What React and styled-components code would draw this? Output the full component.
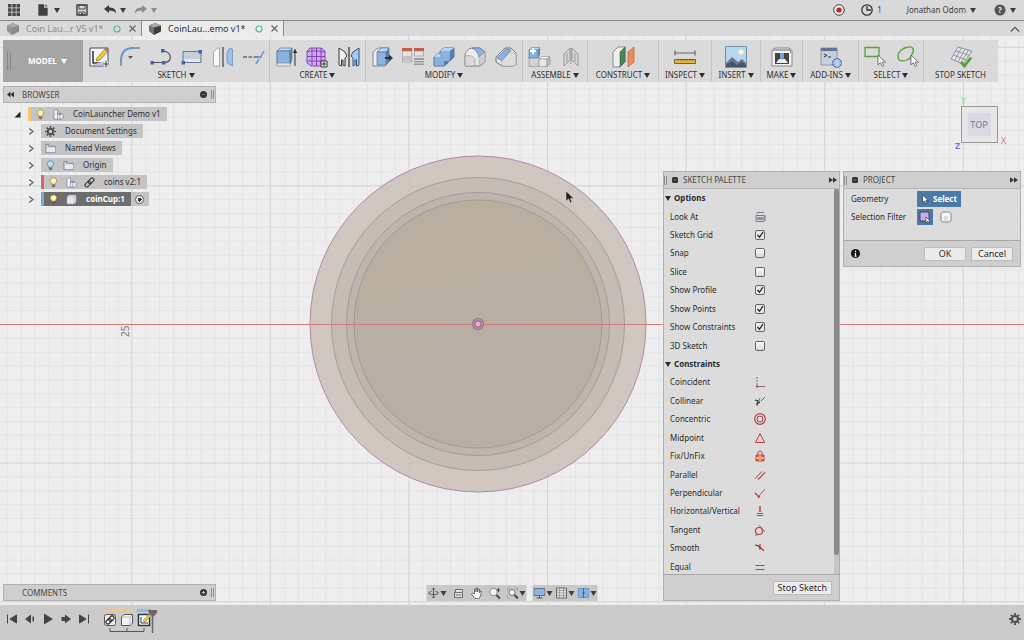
import { useState } from 'react';
import styled, { createGlobalStyle } from 'styled-components';

const GlobalStyle = createGlobalStyle`
  * {
    box-sizing: border-box;
  }

  body {
    margin: 0;
    font-family: "Noto Sans", "Open Sans", sans-serif;
    font-size: 8px;
    line-height: 12px;
    color: #2b2b2b;
    background: #ededed;
  }

  button, input {
    font: inherit;
    color: inherit;
    margin: 0;
  }

  svg {
    display: block;
    flex: none;
  }
`;

const Page = styled.div`
  min-height: 100vh;
  display: flex;
  flex-direction: column;
`;

const TopBar = styled.header`
  height: 21px;
  display: flex;
  align-items: center;
  justify-content: space-between;
  padding: 0 8px;
  background: #d9d9d9;
  border-bottom: 1px solid #858585;
`;

const BarSide = styled.div`
  display: flex;
  align-items: center;
  gap: ${props => props.$gap}px;
`;

const PlainButton = styled.button`
  display: flex;
  align-items: center;
  gap: 4px;
  padding: 0;
  border: 0;
  background: none;
  color: ${props => props.$faded ? '#8b8b8b' : '#3d3d3d'};
`;

const Caret = styled.span`
  flex: none;
  border: 3px solid transparent;
  border-top: 5px solid currentColor;
  border-bottom: 0;
`;

const TabBar = styled.nav`
  height: 15px;
  display: flex;
  align-items: stretch;
  background: #d9d9d9;
`;

const Tab = styled.div`
  width: 142px;
  display: flex;
  align-items: center;
  padding: 0 4px 0 7px;
  gap: 7px;
  border-right: 1px solid #8a8a8a;
  background: ${props => props.$active ? '#ececec' : '#d9d9d9'};
  color: ${props => props.$active ? '#333' : '#8c8c8c'};

  & > .name {
    flex: 1;
    font-size: 9px;
    white-space: nowrap;
  }
`;

const TabBarEnd = styled.div`
  flex: 1;
  display: flex;
  justify-content: flex-end;
  align-items: center;
  padding-right: 4px;
`;

const Workspace = styled.main`
  position: relative;
  flex: 1;
  display: flex;
  flex-direction: column;
  padding: 4px 3px;
`;

const Drawing = styled.svg`
  position: absolute;
  inset: 0;
  width: 100%;
  height: 100%;
`;

const Ribbon = styled.div`
  position: relative;
  display: flex;
  height: 42px;
  margin-right: 23px;
  background: #dadada;
`;

const ModelButton = styled.button`
  flex: 0 1 80px;
  display: flex;
  align-items: center;
  gap: 17px;
  padding: 0 0 0 4px;
  border: 0;
  background: #a5a5a5;
  color: #fff;
  font-weight: bold;

  & > .grip {
    width: 4px;
    height: 18px;
    border: 1px solid #858585;
    border-width: 0 1px;
  }

  & > .label {
    display: flex;
    align-items: center;
    gap: 4px;
  }
`;

const ToolGroup = styled.section`
  flex: 0 1 ${props => props.$width}px;
  display: flex;
  flex-direction: column;
  align-items: stretch;
  padding-top: 5px;
  position: relative;
  border-right: 1px solid ${props => props.$last ? 'transparent' : '#c4c4c4'};

  & > .tools {
    display: flex;
    justify-content: space-around;
  }

  & > button {
    justify-content: center;
    gap: 2px;
    color: #303030;
    white-space: nowrap;
  }
`;

const Columns = styled.div`
  position: relative;
  flex: 1;
  display: flex;
  justify-content: space-between;
`;

const LeftColumn = styled.div`
  width: 213px;
  display: flex;
  flex-direction: column;
  justify-content: space-between;
  padding-top: 4px;
`;

const DockHeader = styled.div`
  height: 17px;
  display: flex;
  align-items: center;
  gap: 4px;
  padding: 0 1px 0 3px;
  background: #cfcfcf;
  border: 1px solid #b2b2b2;

  & > h2 {
    flex: 1;
    margin: 0;
    padding-left: 4px;
    font-size: 8px;
    font-weight: normal;
    color: #484848;
  }

  & > h2:first-child {
    padding-left: 15px;
  }
`;

const Tree = styled.ul`
  display: flex;
  flex-direction: column;
  gap: 3px;
  margin: 0;
  padding: 4px 0 0 11px;
  list-style: none;
`;

const TreeRow = styled.li`
  display: flex;
  align-items: center;
  height: 14px;
  padding-left: ${props => props.$depth * 13}px;

  & > .twist {
    width: 14px;
    display: flex;
    justify-content: flex-start;
  }
`;

const Chip = styled.div`
  display: flex;
  align-items: center;
  height: 14px;
  background: ${props => props.$selected ? '#6d6d6d' : '#c4c4c4'};
  color: ${props => props.$selected ? '#fff' : '#2f2f2f'};
  font-weight: ${props => props.$selected ? 'bold' : 'normal'};
  border-left: ${props => props.$stripe ? `3px solid ${props.$stripe}` : '0'};

  & > .slot {
    width: 18px;
    display: flex;
    justify-content: center;
  }

  & > .label {
    padding: 0 6px;
    white-space: nowrap;
  }
`;

const ActiveMark = styled.label`
  width: 18px;
  height: 14px;
  display: flex;
  align-items: center;
  justify-content: center;
  background: #c4c4c4;

  & > input {
    appearance: none;
    width: 9px;
    height: 9px;
    border: 1px solid #666;
    border-radius: 50%;
    background: radial-gradient(circle, #333 2px, #eee 2px);
  }
`;

const RightColumn = styled.div`
  display: flex;
  flex-direction: column;

  & > .cube {
    height: 89px;
    display: flex;
    justify-content: flex-end;
    padding: 8px 11px 0 0;
  }

  & > .panels {
    flex: 1;
    display: flex;
    align-items: flex-start;
    gap: 3px;
  }
`;

const Panel = styled.section`
  width: ${props => props.$width}px;
  align-self: ${props => props.$tall ? 'stretch' : 'flex-start'};
  display: flex;
  flex-direction: column;
  background: #dcdcdc;
  border: 1px solid #b0b0b0;
`;

const PanelHeader = styled.div`
  height: 17px;
  display: flex;
  align-items: center;
  gap: 5px;
  padding: 0 2px 0 0;
  background: #cfcfcf;
  border-bottom: 1px solid #b5b5b5;

  & > h2 {
    flex: 1;
    margin: 0;
    font-size: 8px;
    font-weight: normal;
    color: #484848;
  }
`;

const Grip = styled.span`
  width: 3px;
  height: 9px;
  border: 1px solid #8e8e8e;
  border-width: 0 1px;
`;

const PaletteBody = styled.div`
  flex: 1;
  display: flex;
  justify-content: space-between;
`;

const PaletteList = styled.div`
  flex: 1;
  display: flex;
  flex-direction: column;
  margin-bottom: -2px;
`;

const PaletteHeading = styled.h3`
  flex: 1;
  display: flex;
  align-items: center;
  gap: 3px;
  margin: 0;
  padding-left: 1px;
  font-size: 8px;
  font-weight: bold;
`;

const PaletteRow = styled.div`
  flex: 1;
  display: flex;
  align-items: center;
  padding-left: 6px;

  & > .label {
    width: 82px;
    white-space: nowrap;
  }

  & > .value {
    width: 16px;
    display: flex;
    justify-content: center;
  }
`;

const ScrollTrack = styled.div`
  width: 5px;
  background: #c6c6c6;

  & > div {
    height: 95%;
    background: #8c8c8c;
    border-radius: 2px;
  }
`;

const CheckBox = styled.input`
  appearance: none;
  display: block;
  width: 10px;
  height: 10px;
  border: 1px solid #666;
  border-radius: 2px;
  background: linear-gradient(#fafafa, #d8d8d8);

  &:checked {
    background: #e8e8e8 url("data:image/svg+xml,%3Csvg xmlns='http://www.w3.org/2000/svg' viewBox='0 0 8 8'%3E%3Cpath d='M1.5 4l2 2.300L7 1' fill='none' stroke='%23222' stroke-width='1.300'/%3E%3C/svg%3E");
  }
`;

const PanelFooter = styled.div`
  position: relative;
  height: 26px;
  display: flex;
  align-items: center;
  justify-content: flex-end;
  gap: 5px;
  padding: 0 7px;
  background: #cfcfcf;
  border-top: 1px solid #a8a8a8;

  & > svg {
    margin-right: auto;
  }
`;

const PushButton = styled.button`
  min-width: 42px;
  height: 14px;
  padding: 0 4px;
  border: 1px solid #bcbcbc;
  background: #ebebeb;
  font-size: 9px;
  line-height: 12px;
`;

const FieldList = styled.div`
  padding: 1px 0 14px;
`;

const FieldRow = styled.div`
  height: 18px;
  display: flex;
  align-items: center;
  gap: 5px;
  padding-left: 7px;

  & > .label {
    width: 61px;
    white-space: nowrap;
  }
`;

const FilterButton = styled.button`
  display: flex;
  align-items: center;
  justify-content: center;
  gap: 3px;
  min-width: 16px;
  height: 16px;
  padding: ${props => props.$wide ? '0 4px' : '0'};
  border: 0;
  background: ${props => props.$on ? '#4a7ba8' : 'none'};
  color: #fff;
  font-weight: bold;
`;

const NavBar = styled.div`
  position: absolute;
  left: 50%;
  bottom: 4px;
  transform: translateX(-50%);
  display: flex;
  gap: 6px;
`;

const NavGroup = styled.div`
  display: flex;
  align-items: center;
  gap: ${props => props.$gap}px;
  height: 16px;
  padding: 0 1px;
  background: #c8c8c8;

  & > button {
    gap: 1px;
  }
`;

const Timeline = styled.footer`
  height: 35px;
  display: flex;
  align-items: flex-start;
  padding: 4px 3px 0 6px;
  background: #cbcbcb;

  & > .playback {
    display: flex;
    gap: 6px;
    padding-top: 4px;
  }

  & > .track {
    flex: 1;
    padding-left: 12px;
  }

  & > .settings {
    padding-top: 4px;
  }
`;

const blue = '#8cb3e0';
const edge = '#58799f';
const cursorPath = 'M0 0v9l2.200-2 1.600 3.400 1.500-.7-1.500-3.200h3z';

const TOOL_ICONS = {
  sketch: <>
    <path d="M3 3h18v18H3z" fill="#f5f7fa" stroke="#3e4c62" />
    <path d="M6 6v12h15" fill="none" stroke="#333" strokeWidth="1.500" />
    <path d="M3.500 20.500h17V15z" fill="#b9c6dc" />
    <path d="M10 13l8-9 3 2-8 9-4 1z" fill="#f4c842" stroke="#87651e" strokeWidth=".7" />
    <path d="M18 3.500l3 2.500" stroke="#c9665b" strokeWidth="2" />
    <path d="M16 19h6M19 16v6" stroke="#fff" strokeWidth="3" />
    <path d="M16 19h6M19 16v6" stroke="#333" />
  </>,
  fillet: <>
    <path d="M3 21v-6M14 3h8" stroke="#555" />
    <path d="M3 16C3 8 7 3 15 3" fill="none" stroke="#6695d5" strokeWidth="2" />
    <path d="M10 11h5l-2.500 3z" fill="#555" />
  </>,
  spline: <>
    <path d="M3 17.500h12c6 0 7-4 6-7-1-3-3-4-7-4.500" fill="none" stroke="#555" strokeWidth="1.200" />
    <path d="M1.500 16h3.500v3.500H1.500zM13 16h3.500v3.500H13zM12 4h3.500v3.500H12z" fill="#3b68b5" />
  </>,
  rect: <>
    <path d="M3 6.500h18v11H3z" fill="#c4cfdf" stroke="#667891" />
    <path d="M4 14h16v3H4z" fill="#e4e9f0" />
    <path d="M1.500 16h3.500v3.500H1.500zM18.500 5h3.500v3.500h-3.500z" fill="#3b68b5" />
  </>,
  mirror: <>
    <path d="M2.500 21V7l4-4h2v18z" fill="#f7f7f7" stroke="#9b9b9b" strokeWidth=".8" />
    <path d="M21.500 21V4l-3-1-2.500 5v10z" fill="#9dbfe8" stroke="#6893c5" strokeWidth=".8" />
    <path d="M12 2v20" stroke="#444" strokeWidth="1.200" />
  </>,
  trim: <>
    <path d="M1 12h4M6.500 12h3.500M11.500 12h5" stroke="#333" strokeWidth="1.200" />
    <path d="M22 6l-4 7M17 14l-3 5M16 12h4" stroke="#6597dd" strokeWidth="1.500" />
  </>,
  extrude: <>
    <path d="M3 6l3-3h12l-2 3z" fill="#c3daf4" stroke={edge} strokeWidth=".7" />
    <path d="M3 6h13v12.500H3z" fill={blue} stroke={edge} />
    <path d="M16 6l2-3v12l-2 4z" fill="#5987bf" stroke={edge} strokeWidth=".7" />
    <path d="M3 18h13v3H3z" fill="#e5e5e5" stroke="#888" strokeWidth=".7" />
    <path d="M21 21V6M19.500 8L21 4.500 22.500 8" fill="#333" stroke="#333" />
  </>,
  form: <>
    <path d="M5 3h11l4 3v11l-4 4H6l-4-3V6z" fill="#d0aaf0" stroke="#8a48b8" />
    <path d="M2 7c5-2 10-1 18 0M2 11.500h18M2 16h18M7 3v17M11.500 3v18M16 3v18" fill="none" stroke="#8541b2" />
    <path d="M16 16h6v6h-6z" fill="#eee" stroke="#333" />
    <path d="M17 19h4M19 17v4" stroke="#333" />
  </>,
  pattern: <>
    <path d="M2 3l6 4 2 4-2 2v8l-2-1v-5H4.500v6L2 20z" fill="#f1f1f1" stroke="#353535" />
    <path d="M22 3l-6 4-2 4 2 2v8l2-1v-5h1.500v6l2.500-1z" fill="#a9c8ee" stroke="#345277" />
    <path d="M12 2v20" stroke="#333" strokeWidth="1.200" />
  </>,
  pull: <>
    <path d="M3 7l5-4h11v14l-4 4H3z" fill="#ededed" stroke="#888" />
    <path d="M7 7l4-4h8l-3 4z" fill="#c1d9f5" stroke={edge} strokeWidth=".7" />
    <path d="M7 7h9v13H7z" fill={blue} stroke={edge} strokeWidth=".7" />
    <path d="M16 7l3-4v13l-3 4z" fill="#557fb3" />
    <path d="M15 12h4V9.500l4 3.500-4 3.500V14h-4z" fill="#333" />
  </>,
  align: <>
    <path d="M1.500 6h9v11h-9zM13.500 6h9v5h-9z" fill="#e6e6e6" stroke="#999" strokeWidth=".7" />
    <path d="M1 3h10v3H1zM13 3h10v3H13z" fill="#c2604d" />
    <path d="M2 11h8v5H2z" fill="#c4c4c4" />
    <path d="M13 13h10v2H13zM13 16h10v1.500H13zM13 18.500h10V20H13z" fill="#9c9c9c" />
  </>,
  combine: <>
    <path d="M8 6l4-3h10v9l-4 4h-2v2l-4 3H2v-9l3-3h3z" fill={blue} stroke={edge} />
    <path d="M8 6l4-3h10l-4 3zM2 12l3-3h3v3z" fill="#bad5f3" />
    <path d="M18 6l4-3v9l-4 4zM12 16h4v2l-4 3z" fill="#547faf" />
  </>,
  round: <>
    <path d="M2 11c0-5 4-8 8-8h7l5 4v10l-5 4H2z" fill="#ececec" stroke="#828282" />
    <path d="M9 3h8l5 4-6 5c-1-4-3-7-7-9z" fill={blue} stroke={edge} strokeWidth=".7" />
    <path d="M2 11c5-1 9 0 10 4v6H2z" fill="#dadada" stroke="#999" strokeWidth=".7" />
    <path d="M16 12v9l6-4V7z" fill="#cfcfcf" stroke="#999" strokeWidth=".5" />
  </>,
  chamfer: <>
    <path d="M2 12L11 3h6l5 5v12l-4 1H8l-6-4z" fill="#e6e6e6" stroke="#777" />
    <path d="M3 13L12 4l5 1-9 11z" fill={blue} stroke={edge} strokeWidth=".7" />
    <path d="M8 16l9-10 5 4v10l-4 1H8z" fill="#ddd" stroke="#aaa" strokeWidth=".6" />
  </>,
  component: <>
    <path d="M2 12h10v9.500H2z" fill="#d4d4d4" stroke="#999" strokeWidth=".7" />
    <path d="M12 14l2.500-2.500H23L20 14z" fill="#f8f8f8" stroke="#999" strokeWidth=".7" />
    <path d="M12 14h8v7.500h-8z" fill="#e6e6e6" stroke="#999" strokeWidth=".7" />
    <path d="M20 14l3-2.500V19l-3 2.500z" fill="#bbb" stroke="#999" strokeWidth=".7" />
    <path d="M2 5l2-2.500h9L11 5z" fill="#c3daf4" stroke={edge} strokeWidth=".5" />
    <path d="M2 5h9v8H2z" fill={blue} stroke={edge} strokeWidth=".7" />
    <path d="M11 5l2-2.500V10l-2 3z" fill="#5987bf" />
    <path d="M3 6h6M6 3v6" stroke="#fff" strokeWidth="2" />
  </>,
  joint: <>
    <path d="M5 9l6-6v12l-6 6zM19 9l-6-6v12l6 6z" fill="#d8d8d8" stroke="#999" />
    <path d="M12 3v16M8 8v9M16 8v9" stroke="#999" />
  </>,
  construct: <>
    <path d="M2 7l5-5h7v15l-5 5H2z" fill="#f0f0f0" stroke="#888" />
    <path d="M9 7l5-5v15l-5 5z" fill="#438b47" stroke="#567" strokeWidth=".7" />
    <path d="M17 7l6-5v15l-6 5z" fill="#ed8f5c" stroke="#b85e3b" strokeWidth=".7" />
  </>,
  measure: <>
    <path d="M2 8h20M2 5.500v5M22 5.500v5" stroke="#666" strokeWidth="1.200" />
    <path d="M1.500 14.500h21v4h-21z" fill="#e6b53f" stroke="#85651d" />
    <path d="M5 14v2M8 14v2M11 14v2M14 14v2M17 14v2M20 14v2" stroke="#6d521a" strokeWidth=".7" />
  </>,
  insert: <>
    <path d="M1.500 1.500h21v21h-21z" fill="#b5d8f0" stroke="#7590a8" />
    <circle cx="17" cy="7" r="2.500" fill="#fff7c4" />
    <path d="M2 18l6-6 6 5 4-3 4 4v4H2z" fill="#6b788c" />
    <path d="M2 20l6-4 5 4 5-3 4 3v2H2z" fill="#46536a" />
  </>,
  make: <>
    <path d="M2 5l3-2h14l3 2v16H2z" fill="#f3f3f3" stroke="#888" />
    <path d="M2 5h20" stroke="#aaa" strokeWidth="2" />
    <path d="M5 8h14v11H5z" fill="#444" />
    <path d="M6 18l3-4h6l3 4z" fill="#eee" />
    <path d="M10 8h4v5l-2 2-2-2z" fill="#70a5de" />
    <path d="M20 6h1v2h-1z" fill="#5c9b4a" />
  </>,
  addins: <>
    <path d="M2 3h16v17H2z" fill="#c8d0dd" stroke="#8c97a9" />
    <path d="M2 3h16v3H2z" fill="#66758f" />
    <path d="M5 9l3 1.500L5 12M9 12h3" fill="none" stroke="#333" />
    <circle cx="18" cy="18" r="4.500" fill="#86a9d7" stroke="#466da5" />
    <path d="M13.500 18h9M18 13.500v9M15 15c2 2 4 2 6 0M15 21c2-2 4-2 6 0" fill="none" stroke="#e4eefb" strokeWidth=".8" />
  </>,
  selectBox: <>
    <path d="M2 2.500h14v9H2z" fill="none" stroke="#5aa03b" strokeWidth="1.300" />
    <path d={cursorPath} transform="translate(15 10) scale(1.100)" fill="#fff" stroke="#666" strokeWidth=".8" />
  </>,
  selectFree: <>
    <path d="M13 2c5-1 7 3 4 7-1 2 0 4-5 6-6 2-9 1-9-4 0-4 4-8 10-9z" fill="none" stroke="#5aa03b" strokeWidth="1.300" />
    <path d={cursorPath} transform="translate(16 10) scale(1.100)" fill="#fff" stroke="#666" strokeWidth=".8" />
  </>,
  stop: <>
    <path d="M9 2l14 4-9 13-12-5z" fill="#e2e3e7" stroke="#7c808a" strokeWidth=".8" />
    <path d="M12.500 3L5.500 15.500M16 4L9 17M19.500 5L12 18M7 6l13.500 4.500M4.500 10l13 5" stroke="#8e929c" strokeWidth=".9" />
    <path d="M12 17l3.500 4L22 12.500" fill="none" stroke="#58a330" strokeWidth="2.800" />
  </>,
};

const TREE_ICONS = {
  bulb: <><path d="M4 7C1 4 3 1 6 1s5 3 2 6v1H4z" fill="#fff2ad" stroke="#8b7640" strokeWidth=".7" /><path d="M4 9h4M4.500 10.500h3" stroke="#555" /></>,
  bulbOff: <><path d="M4 7C1 4 3 1 6 1s5 3 2 6v1H4z" fill="#b9dcf5" stroke="#4f7897" strokeWidth=".8" /><path d="M4 9h4M4.500 10.500h3" stroke="#555" /></>,
  parts: <><path d="M1 2l1-1h3v4h5l1 1v4l-1 1H1z" fill="#f3f3f3" stroke="#76839a" strokeWidth=".8" /><path d="M5 4v7M5 6h5M7.500 3v8" stroke="#76839a" strokeWidth=".7" /></>,
  folder: <><path d="M1 1.500h3v2h7v7H1z" fill="#cdd3dd" stroke="#65758e" strokeWidth=".8" /><path d="M2 5h9v5H2z" fill="#e9ebef" /></>,
  body: <><path d="M1 3l2-2h8v8l-2 2H1z" fill="#e8e8ed" stroke="#8a8d9a" strokeWidth=".7" /><path d="M1 3h8v8M9 3l2-2" fill="none" stroke="#a7aab4" strokeWidth=".6" /></>,
  link: <g transform="rotate(-45 6 6)" fill="none" stroke="#3e3e3e" strokeWidth="1.300"><rect x="0" y="4" width="7" height="4" rx="2" /><rect x="5" y="4" width="7" height="4" rx="2" /></g>,
  gear: <><circle cx="6" cy="6" r="3" fill="none" stroke="#505050" strokeWidth="2" /><path d="M6 0v2M6 10v2M0 6h2M10 6h2M1.800 1.800l1.400 1.400M8.800 8.800l1.400 1.400M1.800 10.200l1.400-1.400M8.800 3.200l1.400-1.400" stroke="#505050" strokeWidth="1.800" /></>,
};

const red = '#c33b36';
const CONSTRAINT_ICONS = {
  lookAt: <><path d="M2 10.500V4.500h8v6zM3 3V1.500h7M11 4v6" fill="none" stroke="#69738a" strokeWidth=".9" /><path d="M3 6h6v3H3z" fill="#8a94ae" /></>,
  coincident: <><path d="M3 1v8" stroke="#777" strokeDasharray="2 1" /><path d="M4 10.500h7" stroke="#777" /><path d="M2 9.500h2v2H2z" fill={red} /></>,
  collinear: <><path d="M1 5l3 1-1 3 3-2" fill="none" stroke="#333" strokeWidth="1.200" /><path d="M7 6l4-4" stroke={red} /><path d="M3 11l3-8" stroke="#555" strokeWidth=".8" /></>,
  concentric: <><circle cx="6" cy="6" r="5.300" fill="none" stroke={red} strokeWidth="1.200" /><circle cx="6" cy="6" r="3" fill="none" stroke="#9d3b3b" /></>,
  midpoint: <path d="M6 1.500l4.500 9h-9z" fill="none" stroke={red} />,
  fix: <><path d="M4 5V3c0-2.500 4-2.500 4 0v2" fill="none" stroke={red} /><path d="M2 5h8v6H2z" fill="#db7153" stroke="#b83e2b" strokeWidth=".8" /><path d="M2 8h8M6 5v6" stroke="#f3cdb9" /></>,
  parallel: <><path d="M1 9.500l7-7" stroke="#555" /><path d="M4 10.500l7-7" stroke={red} strokeWidth="1.200" /></>,
  perpendicular: <><path d="M5 9l6-7" stroke="#777" /><path d="M1 6l4 4M4 11l2-2" stroke={red} strokeWidth="1.200" /></>,
  horizontal: <><path d="M6 1v6" stroke={red} strokeWidth="1.500" /><path d="M3 8.500h6M3 10.500h6" stroke={red} /></>,
  tangent: <><circle cx="5" cy="7" r="3.500" fill="none" stroke={red} strokeWidth="1.200" /><path d="M5 1l6 7M1 11h3" stroke="#777" /></>,
  smooth: <><path d="M1 3c2 0 4 1 5 3" fill="none" stroke="#444" strokeWidth="1.200" /><path d="M6 2v6M6 5l4 4" fill="none" stroke={red} strokeWidth="1.300" /></>,
  equal: <path d="M1.500 4.500h9M1.500 8.500h9" stroke={red} strokeWidth="1.200" />,
};

const SMALL_ICONS = {
  apps: <path d="M0 0h3.500v3.500H0zM4.300 0h3.500v3.500H4.300zM8.500 0H12v3.500H8.500zM0 4.300h3.500v3.500H0zM4.300 4.300h3.500v3.500H4.300zM8.500 4.300H12v3.500H8.500zM0 8.500h3.500V12H0zM4.300 8.500h3.500V12H4.300zM8.500 8.500H12V12H8.500z" fill="#4a4a4a" />,
  file: <path d="M2 1h5v3h3v7H2zM8 1l2 2H8z" fill="#404040" />,
  save: <><path d="M1 1h10v10H1z" fill="none" stroke="#444" strokeWidth="1.500" /><path d="M3 1h6v4H3zM3 8h6v3H3z" fill="none" stroke="#444" /><path d="M5 9h2v2H5z" fill="#444" /></>,
  undo: <path d="M0 5l5-4v2.500c4 0 7 1 7 6-1-2-3-3-7-3V9z" fill="currentColor" />,
  redo: <path d="M12 5L7 1v2.500C3 3.500 0 4.500 0 9.500c1-2 3-3 7-3V9z" fill="currentColor" />,
  record: <><circle cx="6" cy="6" r="5.300" fill="#eee" stroke="#444" /><circle cx="6" cy="6" r="2.600" fill="#cc1f22" /></>,
  clock: <><circle cx="6" cy="6" r="5.200" fill="none" stroke="#333" strokeWidth="1.300" /><path d="M6 2v4h4" fill="none" stroke="#333" strokeWidth="1.300" /></>,
  cube: <><path d="M0 2.500L6 0l6 2.500v6L5 12 0 8z" fill="currentColor" /><path d="M0 2.500L6 0l6 2.500L5 4.500z" fill="#aaa" /><path d="M5 4.500V12L0 8V2.500z" fill="#999" opacity=".6" /></>,
  close: <path d="M2 2l8 8M10 2l-8 8" stroke="#666" strokeWidth="1.700" />,
  sync: <circle cx="6" cy="6" r="4.500" fill="none" stroke="#58b695" strokeWidth="1.700" />,
  up: <path d="M1 9l5-5 5 5" fill="none" stroke="#555" strokeWidth="1.500" />,
  rewind: <path d="M0 6l6-5v10zM6 6l6-5v10z" fill="#333" />,
  forward: <path d="M12 6L6 2v8zM6 6L0 2v8z" fill="#333" />,
  minus: <><circle cx="6" cy="6" r="6" fill="#333" /><path d="M3 6h6" stroke="#777" strokeWidth="1.500" /></>,
  plus: <><circle cx="6" cy="6" r="6" fill="#333" /><path d="M3 6h6M6 3v6" stroke="#ccc" strokeWidth="1.500" /></>,
  square: <><rect width="12" height="12" rx="3" fill="#333" /><path d="M3 6h6" stroke="#888" strokeWidth="1.500" /></>,
  info: <><circle cx="6" cy="6" r="6" fill="#111" /><path d="M6 5v5M4.500 9.500h3" stroke="#fff" strokeWidth="1.600" /><circle cx="6" cy="3" r="1" fill="#fff" /></>,
  open: <path d="M11 1v10H1z" fill="#222" />,
  twist: <path d="M3 2l5 4-5 4" fill="none" stroke="#555" strokeWidth="1.400" />,
  arrow: <path d={cursorPath} transform="translate(2 0) scale(1.150)" fill="#fff" stroke="#222" strokeWidth=".7" />,
  filter: <><path d="M1 1h9v9H1z" fill="#c9a9ec" stroke="#333" strokeWidth=".8" /><path d="M7 6v6l1.500-1.500L12 11z" fill="#fff" stroke="#333" strokeWidth=".6" /></>,
  filterBody: <><rect x="1" y="1" width="10" height="10" rx="2" fill="#f5f5f5" stroke="#888" /><path d="M4 5h4v5H4z" fill="#ddd" /></>,
  orbit: <path d="M6 1v10M4.500 2.500L6 1l1.500 1.500M4.500 9.500L6 11l1.500-1.500M8 4.500c5 1 3 3-2 3s-7-2-2-3" fill="none" stroke="#555" />,
  look: <><path d="M2 10.500v-5h8v5zM3 5V2.500h7V5M3 8h6" fill="#e2e2e2" stroke="#555" strokeWidth=".8" /></>,
  hand: <path d="M4 11L1 7l1-1 2 1V2h1.500v3V1H7v4l1-3h1v4l1-2h1l-1 5-2 3z" fill="#fff" stroke="#555" strokeWidth=".8" />,
  zoom: <><circle cx="5" cy="5" r="3.800" fill="#f4f4f4" stroke="#888" /><path d="M8 8l3.500 3.500" stroke="#444" strokeWidth="2" /><path d="M10 1v4M8 3h4" stroke="#444" /></>,
  fit: <><path d="M1 4V1h3M8 1h3v3M1 8v3h3" fill="none" stroke="#999" strokeWidth=".8" /><circle cx="5.500" cy="5.500" r="3" fill="#f4f4f4" stroke="#777" /><path d="M8 8l3.500 3.500" stroke="#444" strokeWidth="2" /></>,
  display: <><path d="M.5 1.500h11v7H.5z" fill="#8db4e2" stroke="#5b7390" /><path d="M6 9v2M3 11h6" stroke="#555" /></>,
  grid: <><path d="M1 1h10v10H1z" fill="#e5e5e5" stroke="#666" /><path d="M1 3.500h10M1 6h10M1 8.500h10M4 1v10M8 1v10" stroke="#888" strokeWidth=".7" /></>,
  views: <><path d="M.5 1.500h11v9H.5z" fill="#86b2e2" stroke="#658db8" strokeWidth=".8" /><path d="M6 1v10M4.500 6h3" stroke="#315681" strokeWidth=".8" /></>,
  first: <path d="M1.500 1.500v9M4 6l6.500-4v8z" fill="#444" stroke="#444" />,
  back: <path d="M1 6l6-4.500v9zM8.500 3.500h1.500v5H8.500z" fill="#444" />,
  play: <path d="M2 .5l9 5.500-9 5.500z" fill="#444" />,
  next: <path d="M11 6L5 1.500v9zM1.500 4H5v4H1.500z" fill="#444" />,
  last: <path d="M10.500 1.500v9M8 6L1.500 2v8z" fill="#444" stroke="#444" />,
};

function Icon({ art, size = 12, box = 12 }) {
  return (
    <svg width={size} height={size} viewBox={`0 0 ${box} ${box}`} aria-hidden='true'>
      {art}
    </svg>
  );
}

const TOOL_GROUPS = [
  { name: 'SKETCH', width: 187, tools: ['sketch', 'fillet', 'spline', 'rect', 'mirror', 'trim'] },
  { name: 'CREATE', width: 96, tools: ['extrude', 'form', 'pattern'] },
  { name: 'MODIFY', width: 157, tools: ['pull', 'align', 'combine', 'round', 'chamfer'] },
  { name: 'ASSEMBLE', width: 65, tools: ['component', 'joint'] },
  { name: 'CONSTRUCT', width: 71, tools: ['construct'] },
  { name: 'INSPECT', width: 53, tools: ['measure'] },
  { name: 'INSERT', width: 49, tools: ['insert'] },
  { name: 'MAKE', width: 42, tools: ['make'] },
  { name: 'ADD-INS', width: 56, tools: ['addins'] },
  { name: 'SELECT', width: 65, tools: ['selectBox', 'selectFree'] },
  { name: 'STOP SKETCH', width: 74, tools: ['stop'], plain: true },
];

const TREE = [
  { label: 'CoinLauncher Demo v1', depth: 0, stripe: '#f5c766', icons: ['bulb', 'parts'] },
  { label: 'Document Settings', depth: 1, icons: ['gear'] },
  { label: 'Named Views', depth: 1, icons: ['folder'] },
  { label: 'Origin', depth: 1, icons: ['bulbOff', 'folder'] },
  { label: 'coins v2:1', depth: 1, stripe: '#e0626e', icons: ['bulb', 'parts', 'link'] },
  { label: 'coinCup:1', depth: 1, stripe: '#72acd8', icons: ['bulb', 'body'], selected: true },
];

const OPTIONS = [
  ['Sketch Grid', true],
  ['Snap', false],
  ['Slice', false],
  ['Show Profile', true],
  ['Show Points', true],
  ['Show Constraints', true],
  ['3D Sketch', false],
];

const CONSTRAINTS = [
  ['Coincident', 'coincident'],
  ['Collinear', 'collinear'],
  ['Concentric', 'concentric'],
  ['Midpoint', 'midpoint'],
  ['Fix/UnFix', 'fix'],
  ['Parallel', 'parallel'],
  ['Perpendicular', 'perpendicular'],
  ['Horizontal/Vertical', 'horizontal'],
  ['Tangent', 'tangent'],
  ['Smooth', 'smooth'],
  ['Equal', 'equal'],
];

function SketchCanvas() {
  return (
    <Drawing viewBox='0 0 1024 569' preserveAspectRatio='xMidYMid slice'>
      <defs>
        <pattern id='minor' x='478' y='288' width='13.860' height='13.860' patternUnits='userSpaceOnUse'>
          <path d='M0 .5h14M.5 0v14' stroke='#e3e4e5' fill='none' />
        </pattern>
        <pattern id='major' x='547' y='288' width='138.600' height='138.600' patternUnits='userSpaceOnUse'>
          <path d='M0 .5h139M.5 0v139' stroke='#d3d5d6' fill='none' />
        </pattern>
        <linearGradient id='cup' x1='0' y1='0' x2='.2' y2='1'>
          <stop offset='.4' stopColor='#b8ad9e' />
          <stop offset='.75' stopColor='#b6aea6' />
        </linearGradient>
      </defs>
      <rect width='1024' height='569' fill='#eee' />
      <rect width='1024' height='569' fill='url(#minor)' />
      <rect width='1024' height='569' fill='url(#major)' />
      <g stroke='#9c938c' strokeWidth='.8'>
        <circle cx='478' cy='288' r='168' fill='#cbc1ba' fillOpacity='.88' stroke='#a874a0' />
        <circle cx='478' cy='288' r='146.500' fill='#c2bab2' fillOpacity='.75' />
        <circle cx='478' cy='288' r='131.500' fill='#bcb3a9' fillOpacity='.75' />
        <circle cx='478' cy='288' r='124' fill='url(#cup)' fillOpacity='.85' />
      </g>
      <path d='M0 288.500h1024' stroke='#d67b7b' />
      <circle cx='478' cy='288' r='5.500' fill='#b8a9b0' stroke='#8d8489' strokeWidth='1.500' />
      <circle cx='478' cy='288' r='3.200' fill='#d5b9c9' stroke='#bd4f97' strokeWidth='1.300' />
      <text x='-301' y='129' transform='rotate(-90)' fontSize='10' fill='#777'>25</text>
      <path d={cursorPath} transform='translate(566 155) scale(1.150)' fill='#222' stroke='#ddd' strokeWidth='.5' />
    </Drawing>
  );
}

function ViewCube() {
  return (
    <svg width='58' height='64' viewBox='0 0 58 64' role='img' aria-label='View cube'>
      <path d='M11.500 12v5' stroke='#9be89b' />
      <rect x='9.500' y='16.500' width='36' height='36' fill='#e7e7e7' stroke='#999' />
      <rect x='16' y='23' width='23' height='23' fill='#dadae2' />
      <text x='27' y='38' textAnchor='middle' fontSize='9' fill='#777b86'>TOP</text>
      <text x='9' y='14' fontSize='9' fill='#7fe37f'>Y</text>
      <text x='49' y='54' fontSize='9' fill='#ee7777'>X</text>
      <text x='3' y='59' fontSize='9' fontWeight='bold' fill='#7474e8'>Z</text>
    </svg>
  );
}

function TimelineTrack() {
  return (
    <svg width='58' height='27' viewBox='0 0 58 27' role='img' aria-label='Design history'>
      <path d='M1 1.500h31' stroke='#f0c987' strokeWidth='3' />
      <path d='M35 1.500h14' stroke='#83c3ea' strokeWidth='3' />
      <rect x='2.500' y='5.500' width='11' height='11' rx='2' fill='#eee' stroke='#555' />
      <g transform='rotate(-45 8 11)' fill='none' stroke='#333' strokeWidth='1.200'>
        <rect x='3' y='9' width='6' height='4' rx='2' />
        <rect x='7' y='9' width='6' height='4' rx='2' />
      </g>
      <path d='M19.500 8l2.500-2.500h8.500V14L28 16.500h-8.500z' fill='#f5f5f5' stroke='#555' />
      <path d='M19.500 8H28v8M28 8l2-2' fill='none' stroke='#bbb' />
      <path d='M36.500 5.500h11v11h-11z' fill='#fff' stroke='#26344c' strokeWidth='1.500' />
      <path d='M39 8v6h7' fill='none' stroke='#333' />
      <path d='M41 12l6-7 2 2-6 6z' fill='#f1c83c' stroke='#8d7128' strokeWidth='.6' />
      <path d='M8 19v3.500h34V19M25 19v3' fill='none' stroke='#555' />
      <path d='M46 1h9v3l-4 4-4-4z' fill='#666' />
      <path d='M50.500 5v19' stroke='#666' strokeWidth='1.500' />
    </svg>
  );
}

function DocumentTab({ name, active }) {
  return (
    <Tab $active={active}>
      <PlainButton as='span' $faded={!active}><Icon art={SMALL_ICONS.cube} /></PlainButton>
      <span className='name'>{name}</span>
      <Icon art={SMALL_ICONS.sync} size={8} />
      <PlainButton aria-label='Close tab'><Icon art={SMALL_ICONS.close} size={9} /></PlainButton>
    </Tab>
  );
}

function NavButton({ icon, menu }) {
  return (
    <PlainButton aria-label={icon}>
      <Icon art={SMALL_ICONS[icon]} />
      {menu && <Caret />}
    </PlainButton>
  );
}

function SketchPalette() {
  const [options, setOptions] = useState(OPTIONS);

  function toggle(index) {
    setOptions(options.map(([name, on], i) => [name, i === index ? !on : on]));
  }

  return (
    <Panel $width={177} $tall>
      <PanelHeader>
        <Grip />
        <Icon art={SMALL_ICONS.square} size={6} />
        <h2>SKETCH PALETTE</h2>
        <Icon art={SMALL_ICONS.forward} size={8} />
      </PanelHeader>
      <PaletteBody>
        <PaletteList>
          <PaletteHeading><Caret />Options</PaletteHeading>
          <PaletteRow>
            <span className='label'>Look At</span>
            <PlainButton className='value' aria-label='Look At'><Icon art={CONSTRAINT_ICONS.lookAt} /></PlainButton>
          </PaletteRow>
          {options.map(([name, on], i) =>
            <PaletteRow key={name}>
              <label className='label' htmlFor={`option-${i}`}>{name}</label>
              <span className='value'>
                <CheckBox type='checkbox' id={`option-${i}`} checked={on} onChange={() => toggle(i)} />
              </span>
            </PaletteRow>
          )}
          <PaletteHeading><Caret />Constraints</PaletteHeading>
          {CONSTRAINTS.map(([name, icon]) =>
            <PaletteRow key={name}>
              <span className='label'>{name}</span>
              <PlainButton className='value' aria-label={name}><Icon art={CONSTRAINT_ICONS[icon]} /></PlainButton>
            </PaletteRow>
          )}
        </PaletteList>
        <ScrollTrack><div /></ScrollTrack>
      </PaletteBody>
      <PanelFooter>
        <PushButton>Stop Sketch</PushButton>
      </PanelFooter>
    </Panel>
  );
}

function ProjectPanel() {
  return (
    <Panel $width={178}>
      <PanelHeader>
        <Grip />
        <Icon art={SMALL_ICONS.square} size={6} />
        <h2>PROJECT</h2>
        <Icon art={SMALL_ICONS.forward} size={8} />
      </PanelHeader>
      <FieldList>
        <FieldRow>
          <span className='label'>Geometry</span>
          <FilterButton $on $wide><Icon art={SMALL_ICONS.arrow} size={9} />Select</FilterButton>
        </FieldRow>
        <FieldRow>
          <span className='label'>Selection Filter</span>
          <FilterButton $on aria-label='Curves'><Icon art={SMALL_ICONS.filter} /></FilterButton>
          <FilterButton aria-label='Bodies'><Icon art={SMALL_ICONS.filterBody} /></FilterButton>
        </FieldRow>
      </FieldList>
      <PanelFooter>
        <Icon art={SMALL_ICONS.info} size={9} />
        <PushButton>OK</PushButton>
        <PushButton>Cancel</PushButton>
      </PanelFooter>
    </Panel>
  );
}

function App() {
  return (
    <Page>
      <GlobalStyle />
      <TopBar>
        <BarSide $gap={16}>
          <PlainButton aria-label='Data panel'><Icon art={SMALL_ICONS.apps} /></PlainButton>
          <PlainButton aria-label='File'><Icon art={SMALL_ICONS.file} size={14} /><Caret /></PlainButton>
          <PlainButton aria-label='Save'><Icon art={SMALL_ICONS.save} /></PlainButton>
          <BarSide $gap={9}>
            <PlainButton aria-label='Undo'><Icon art={SMALL_ICONS.undo} /><Caret /></PlainButton>
            <PlainButton aria-label='Redo' $faded><Icon art={SMALL_ICONS.redo} /><Caret /></PlainButton>
          </BarSide>
        </BarSide>
        <BarSide $gap={16}>
          <PlainButton aria-label='Record'><Icon art={SMALL_ICONS.record} /></PlainButton>
          <BarSide $gap={25}>
            <PlainButton><Icon art={SMALL_ICONS.clock} />1</PlainButton>
            <BarSide $gap={18}>
              <PlainButton>Jonathan Odom<Caret /></PlainButton>
              <PlainButton aria-label='Help'>
                <svg width='12' height='12' viewBox='0 0 12 12'>
                  <circle cx='6' cy='6' r='5.500' fill='#555' />
                  <text x='6' y='9' textAnchor='middle' fontSize='8' fontWeight='bold' fill='#eee'>?</text>
                </svg>
                <Caret />
              </PlainButton>
            </BarSide>
          </BarSide>
        </BarSide>
      </TopBar>
      <TabBar>
        <DocumentTab name='Coin Lau...r V5 v1*' />
        <DocumentTab name='CoinLau...emo v1*' active />
        <TabBarEnd>
          <PlainButton aria-label='Collapse'><Icon art={SMALL_ICONS.up} size={10} /></PlainButton>
        </TabBarEnd>
      </TabBar>
      <Workspace>
        <SketchCanvas />
        <Ribbon>
          <ModelButton>
            <span className='grip' />
            <span className='label'>MODEL<Caret /></span>
          </ModelButton>
          {TOOL_GROUPS.map(group =>
            <ToolGroup key={group.name} $width={group.width} $last={group.plain}>
              <div className='tools'>
                {group.tools.map(tool =>
                  <PlainButton key={tool} aria-label={tool}>
                    <Icon art={TOOL_ICONS[tool]} size={24} box={24} />
                  </PlainButton>
                )}
              </div>
              <PlainButton>{group.name}{!group.plain && <Caret />}</PlainButton>
            </ToolGroup>
          )}
        </Ribbon>
        <Columns>
          <LeftColumn>
            <div>
              <DockHeader>
                <Icon art={SMALL_ICONS.rewind} size={7} />
                <h2>BROWSER</h2>
                <Icon art={SMALL_ICONS.minus} size={7} />
                <Grip />
              </DockHeader>
              <Tree>
                {TREE.map(item =>
                  <TreeRow key={item.label} $depth={item.depth}>
                    <span className='twist'>
                      <Icon art={item.depth ? SMALL_ICONS.twist : SMALL_ICONS.open} size={item.depth ? 9 : 7} />
                    </span>
                    <Chip $stripe={item.stripe} $selected={item.selected}>
                      {item.icons.map(icon =>
                        <span className='slot' key={icon}><Icon art={TREE_ICONS[icon]} size={11} /></span>
                      )}
                      <span className='label'>{item.label}</span>
                    </Chip>
                    {item.selected &&
                      <ActiveMark>
                        <input type='radio' aria-label='Active component' defaultChecked />
                      </ActiveMark>
                    }
                  </TreeRow>
                )}
              </Tree>
            </div>
            <DockHeader>
              <h2>COMMENTS</h2>
              <Icon art={SMALL_ICONS.plus} size={7} />
              <Grip />
            </DockHeader>
          </LeftColumn>
          <RightColumn>
            <div className='cube'><ViewCube /></div>
            <div className='panels'>
              <SketchPalette />
              <ProjectPanel />
            </div>
          </RightColumn>
        </Columns>
        <NavBar>
          <NavGroup $gap={6}>
            <NavButton icon='orbit' menu />
            <NavButton icon='look' />
            <NavButton icon='hand' />
            <NavButton icon='zoom' />
            <NavButton icon='fit' menu />
          </NavGroup>
          <NavGroup $gap={3}>
            <NavButton icon='display' menu />
            <NavButton icon='grid' menu />
            <NavButton icon='views' menu />
          </NavGroup>
        </NavBar>
      </Workspace>
      <Timeline>
        <div className='playback'>
          {['first', 'back', 'play', 'next', 'last'].map(name =>
            <PlainButton key={name} aria-label={name}><Icon art={SMALL_ICONS[name]} /></PlainButton>
          )}
        </div>
        <div className='track'><TimelineTrack /></div>
        <div className='settings'>
          <PlainButton aria-label='Timeline settings'><Icon art={TREE_ICONS.gear} /></PlainButton>
        </div>
      </Timeline>
    </Page>
  );
}

export default App;
